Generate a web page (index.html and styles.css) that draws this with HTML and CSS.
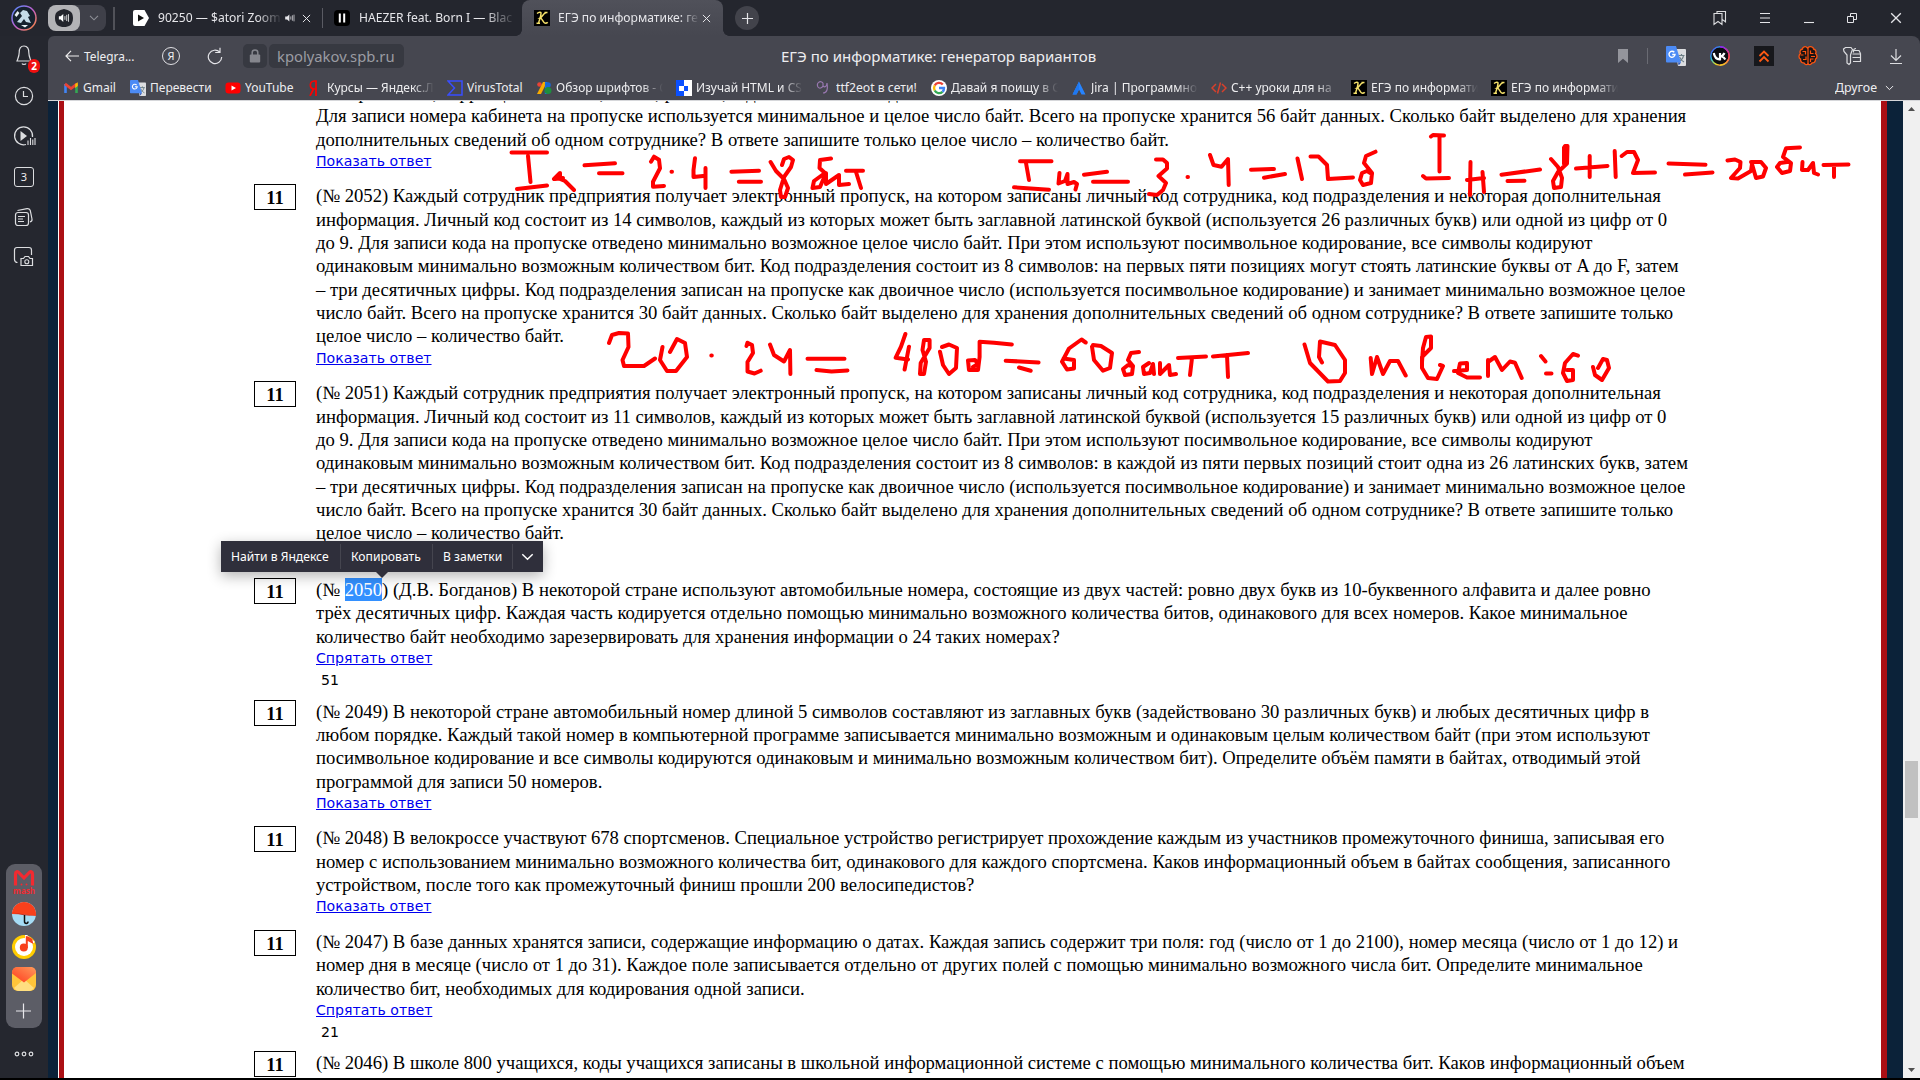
FILE: index.html
```html
<!DOCTYPE html>
<html lang="ru">
<head>
<meta charset="utf-8">
<title>ЕГЭ по информатике: генератор вариантов</title>
<link rel="stylesheet" href="styles.css">
</head>
<body>
<svg class="defs" width="0" height="0">
  <defs>
    <linearGradient id="ring" x1="0" y1="0" x2="1" y2="1"><stop offset="0" stop-color="#4a8dff"/><stop offset=".5" stop-color="#c060d0"/><stop offset="1" stop-color="#ff8a30"/></linearGradient>
    <linearGradient id="vkring" x1="0" y1="0" x2="1" y2="1"><stop offset="0" stop-color="#6030ff"/><stop offset=".35" stop-color="#20c0e0"/><stop offset=".6" stop-color="#e8e020"/><stop offset="1" stop-color="#ff2050"/></linearGradient>
    <linearGradient id="vkring2" x1="0" y1="0" x2="0" y2="1"><stop offset="0" stop-color="#a010f0"/><stop offset=".5" stop-color="#ff2060"/><stop offset="1" stop-color="#f0d020"/></linearGradient>
    <linearGradient id="mailred" x1="0" y1="1" x2="1" y2="0"><stop offset="0" stop-color="#ff3a1e"/><stop offset="1" stop-color="#ff9a5a"/></linearGradient>
    <symbol id="cross" viewBox="0 0 10 10"><path d="M1 1l8 8M9 1l-8 8" stroke="currentColor" stroke-width="1.1" fill="none"/></symbol>
    <symbol id="speaker" viewBox="0 0 12 10"><path d="M0 3.2h2.4L5.2.6v8.8L2.4 6.8H0z" fill="currentColor"/><path d="M7 3v4M9 1.6v6.8M11 .8v8.4" stroke="currentColor" stroke-width=".9"/></symbol>
    <symbol id="gtr" viewBox="0 0 20 20"><path d="M9 3h10a1 1 0 0 1 1 1v15a1 1 0 0 1-1 1h-7z" fill="#dcdde0"/><path d="M12.500 9.500h6M15.500 8v1.500M17.500 9.500c-.5 3-2.500 5-4.500 6M13.500 11c1 2.500 2.500 4 4.500 5" stroke="#6d7f86" stroke-width="1.200" fill="none"/><path d="M1 0h9l5 16.500H1a1 1 0 0 1-1-1V1a1 1 0 0 1 1-1z" fill="#4c8bf5"/><path d="M12 16.500h3l-2.300 3z" fill="#2f58b8"/><path d="M8.300 6.300A3 3 0 1 0 9 8.500H6.200" stroke="#fff" stroke-width="1.400" fill="none"/></symbol>
    <symbol id="kico" viewBox="0 0 16 16"><rect width="16" height="16" fill="#000"/><path d="M3 3.500c2-1.500 4-1.500 4-.5C7 6 5.500 10 4.500 13M2.500 13.300h3.500M12.500 2.600C9.500 3 8 7 6.200 8c2 0 3 5 5 5.300 1.300 0 2-.4 2.500-1.100M10.500 2.500h3" fill="none" stroke="#f4e06a" stroke-width="1.500"/></symbol>
    <symbol id="chev" viewBox="0 0 10 6"><path d="M1 .8l4 4 4-4" fill="none" stroke="currentColor" stroke-width="1.100"/></symbol>
  </defs>
</svg>

<div class="browser">
  <header class="tabs">
    <svg class="avatar" viewBox="0 0 26 26"><circle cx="13" cy="13" r="12" fill="#16222e" stroke="url(#ring)" stroke-width="1.500"/><path d="M6 17l5-6-2-3 3-3 4 1 3 5-2 1 3 6-5-1-2-3-3 4z" fill="#c5dce8"/><path d="M3.500 10l3-4 2 2-3 4zM10 20h7l-3 2.500z" fill="#e8f0f4"/></svg>
    <div class="media"><span class="media-on"><svg viewBox="0 0 18 18" width="18" height="18"><path d="M9 0c5 1.500 9 2 9 9s-4 9-9 9-9-2-9-9S4 1.500 9 0z" fill="#23252c"/><svg x="3.500" y="4.200" width="11" height="9.500" color="#fff"><use href="#speaker"/></svg></svg></span><svg class="media-chev" width="10" height="6"><use href="#chev"/></svg></div>
    <i class="bar bar-a"></i>
    <div class="tab tab-1">
      <svg width="16" height="16" viewBox="0 0 16 16"><path d="M2 0h9.500L16 8l-4.500 8H2a2 2 0 0 1-2-2V2a2 2 0 0 1 2-2z" fill="#fff"/><path d="M5 4.500L11 8l-6 3.500z" fill="#111"/></svg>
      <span class="label fade">90250 — $atori Zoom</span>
      <svg class="snd" width="10" height="8"><use href="#speaker"/></svg>
      <svg width="9" height="9"><use href="#cross"/></svg>
    </div>
    <i class="bar bar-b"></i>
    <div class="tab tab-2">
      <svg width="16" height="16" viewBox="0 0 16 16"><rect width="16" height="16" rx="4" fill="#000"/><path d="M4.800 3.500h2v9h-2zM9.200 3.500h2v9h-2z" fill="#fff"/></svg>
      <span class="label fade">HAEZER feat. Born I — Blac</span>
    </div>
    <div class="tab tab-3">
      <svg width="16" height="16"><use href="#kico"/></svg>
      <span class="label fade">ЕГЭ по информатике: ге</span>
      <svg width="9" height="9"><use href="#cross"/></svg>
    </div>
    <span class="newtab"><svg width="11" height="11" viewBox="0 0 11 11"><path d="M5.500 0v11M0 5.500h11" stroke="#e4e4e8" stroke-width="1.200"/></svg></span>
    <div class="win">
      <svg width="14" height="16" viewBox="0 0 14 16"><path d="M1 3.500h8v11l-4-3-4 3zM4 3.500v-2h8.500v10.300L9.500 9.600" fill="none" stroke="#dcdde0" stroke-width="1.100"/></svg>
      <svg width="12" height="12" viewBox="0 0 12 12"><path d="M1 1.500h10M1 6h10M1 10.500h10" stroke="#e4e4e8" stroke-width="1.100"/></svg>
      <svg width="12" height="12" viewBox="0 0 12 12"><path d="M1 10.500h10" stroke="#e4e4e8" stroke-width="1.100"/></svg>
      <svg width="12" height="12" viewBox="0 0 12 12"><path d="M1.500 4.500h6v6h-6zM4.500 4.500v-3h6v6h-3" fill="none" stroke="#e4e4e8"/></svg>
      <svg width="12" height="12" color="#e4e4e8"><use href="#cross"/></svg>
    </div>
  </header>

  <div class="main">
    <aside class="side">
      <div class="side-top">
        <span class="cell bell"><svg width="16" height="22" viewBox="0 0 16 22"><path d="M8 1c-3.600 0-4.800 3-4.800 6.500S2 13 1 16h14c-1-3-2.200-5-2.200-8.500S11.600 1 8 1zM6 18.500c.5 1.200 3.500 1.200 4 0" fill="none" stroke="#dcdde0" stroke-width="1.200"/></svg><b>2</b></span>
        <span class="cell"><svg width="20" height="20" viewBox="0 0 20 20"><circle cx="10" cy="10" r="8.600" fill="none" stroke="#dcdde0" stroke-width="1.200"/><path d="M9.500 5v5.500h4.500" fill="none" stroke="#dcdde0" stroke-width="1.200"/></svg></span>
        <span class="cell"><svg width="24" height="22" viewBox="0 0 24 22"><path d="M14 19.500A9 9 0 1 1 20.500 12" fill="none" stroke="#dcdde0" stroke-width="1.200"/><path d="M8.500 6l6.500 5-6.500 5z" fill="#dcdde0"/><path d="M16 15.500V20M18.500 13v7M20.800 14.500V20M23 13v7" stroke="#dcdde0" stroke-width="1.100"/></svg></span>
        <span class="cell"><span class="three">3</span></span>
        <span class="cell"><svg width="20" height="20" viewBox="0 0 20 20"><rect x="1.500" y="5.500" width="13" height="13" rx="2.500" fill="none" stroke="#dcdde0" stroke-width="1.200"/><path d="M3.500 3.500L13 1.600c2-.3 3 .3 3.300 2L18 12c.3 1.500-.5 2.500-2 2.900M4 9.500h7M4 12h5M4 14.500h6" fill="none" stroke="#dcdde0" stroke-width="1.200"/></svg></span>
        <span class="cell"><svg width="22" height="22" viewBox="0 0 22 22"><path d="M4.500 16.500c-1.500 0-3-1-3-3V4c0-1.500 1-2.500 2.500-2.500h12c1.500 0 2.500 1 2.500 2.500v5" fill="none" stroke="#dcdde0" stroke-width="1.200"/><path d="M8 12.500h2.500l1.500-2h3.500l1.500 2h2.500v7H8z" fill="none" stroke="#dcdde0" stroke-width="1.200"/><circle cx="13.800" cy="15.700" r="2" fill="none" stroke="#dcdde0" stroke-width="1.100"/></svg></span>
      </div>
      <div class="dock">
        <span class="mash"><svg width="22" height="17" viewBox="0 0 22 17"><path d="M2.500 15.500V4c0-2.500 2-3 3.500-1.200L11 8l5-5.200C17.500 1 19.500 1.500 19.500 4v11.500" fill="none" stroke="#f22a30" stroke-width="3.200"/><circle cx="8.500" cy="14.500" r="1" fill="#f22a30"/><circle cx="13.500" cy="14.500" r="1" fill="#f22a30"/></svg><em>mash</em></span>
        <svg width="24" height="24" viewBox="0 0 24 24"><circle cx="12" cy="12" r="12" fill="#a6dcf5"/><path d="M0 12A12 12 0 0 1 24 12v2L12 12.500 0 12z" fill="#f8401c"/><path d="M0 10.500l24 3.500-12-.8z" fill="#c8281a"/><path d="M12.500 13v6.500c0 2.500 3.500 2.500 3.500 0" fill="none" stroke="#111" stroke-width="1.500"/></svg>
        <svg width="24" height="24" viewBox="0 0 24 24"><circle cx="12" cy="12" r="12" fill="#ffcc00"/><circle cx="12" cy="12" r="9" fill="#fff"/><path d="M13 0h2l8 7-3 2-5-4v7h-2z" fill="#fff"/><circle cx="11.800" cy="12.500" r="4" fill="#f8401c"/><path d="M13.800 1v12h2V6l5.500 3-1-5-4-2.500z" fill="#f8401c"/></svg>
        <svg width="24" height="24" viewBox="0 0 24 24"><rect width="24" height="24" rx="6" fill="#ffc53a"/><path d="M2 21l10-9 10 9c-1.500 2-3 3-5 3H7c-2 0-3.500-1-5-3z" fill="#ffdf80"/><path d="M0 6.500C0 2 2 0 6 0h12c4 0 6 2 6 6L12 15.500z" fill="url(#mailred)"/></svg>
        <svg width="24" height="24" viewBox="0 0 24 24"><path d="M11.500 4.500v15M4 12h15" stroke="#e8e8ec" stroke-width="1.200"/></svg>
      </div>
      <svg class="dots" width="20" height="6" viewBox="0 0 20 6"><g fill="none" stroke="#dcdde0" stroke-width="1.200"><circle cx="3" cy="3" r="1.800"/><circle cx="10" cy="3" r="1.800"/><circle cx="17" cy="3" r="1.800"/></g></svg>
    </aside>

    <div class="view">
      <div class="toolbar">
        <svg class="back" width="14" height="12" viewBox="0 0 14 12"><path d="M6 .8L1 6l5 5.200M1 6h13" fill="none" stroke="#eee" stroke-width="1.200"/></svg>
        <span class="backlabel">Telegra...</span>
        <span class="ya">Я</span>
        <svg class="reload" width="16" height="18" viewBox="0 0 16 18"><path d="M12.800 5.200A6.700 6.700 0 1 0 14.700 10M13 .8v4.700H8.200" fill="none" stroke="#e4e4e8" stroke-width="1.200"/></svg>
        <span class="lock"><svg width="12" height="14" viewBox="0 0 12 14"><rect x=".8" y="5.500" width="10.400" height="8" rx="1" fill="#85868d"/><path d="M3.200 6V3.500c0-3.300 5.600-3.300 5.600 0V6" fill="none" stroke="#85868d" stroke-width="1.500"/></svg></span>
        <span class="url">kpolyakov.spb.ru</span>
        <span class="title">ЕГЭ по информатике: генератор вариантов</span>
        <svg class="mark" width="10" height="14" viewBox="0 0 10 14"><path d="M0 0h10v14L5 9.800 0 14z" fill="#94959c"/></svg>
        <i class="bar bar-c"></i>
        <div class="ext">
          <svg width="20" height="20"><use href="#gtr"/></svg>
          <svg width="20" height="20" viewBox="0 0 20 20"><circle cx="10" cy="10" r="9.200" fill="#0c0c10" stroke="url(#vkring)" stroke-width="1.400"/><path d="M10 .8a9.200 9.200 0 0 1 0 18.400" fill="none" stroke="url(#vkring2)" stroke-width="1.400"/><path d="M3.800 7c.8 4.500 3 6.500 6.200 6.300V7M10 10.300c2 0 3.500-1.500 4.500-3.300M11.500 10.200c1.500.5 3 1.800 3.800 3.300" fill="none" stroke="#fff" stroke-width="2.200"/></svg>
          <svg width="20" height="20" viewBox="0 0 20 20"><rect width="20" height="20" fill="#17181c"/><path d="M5.500 10L10 5.500l4.500 4.500M5.500 15.500L10 11l4.500 4.500" fill="none" stroke="#ff5a14" stroke-width="1.800"/></svg>
          <svg width="20" height="20" viewBox="0 0 20 20"><path d="M9.500 2C7.500-.5 4.500 1 4.500 3 2 3.500 1.500 6 2.500 7.500.5 9 .5 12 2.500 13c0 2.500 1.500 4 3.500 4 1 2 3 2 4 .8 1 1.200 3 1.200 4-.8 2 0 3.500-1.500 3.500-4 2-1 2-4 0-5.500 1-1.500.5-4-2-4.500C15.500 1 12.500-.5 9.500 2z" fill="#1c1414" stroke="#ff5410" stroke-width="1.300"/><path d="M10 2v16M4.500 5.500h3v3M2.500 9h3M5 13.500h3v-3M12.500 4.500v3h3M13 10.500h4M12.500 16v-3h3" fill="none" stroke="#ff5410" stroke-width="1.200"/></svg>
          <svg width="20" height="20" viewBox="0 0 20 20"><path d="M3.500 1.500h5.500l1.500 2L9 7.500 8.500 9v8L7 18.500 5 17V9L2 5.500 1.500 3z" fill="none" stroke="#dcdde0" stroke-width="1.200"/><path d="M11.500 6.500V5c0-1.500 1-2.500 2.500-2.500M10.500 8h8v7.500h-7.500M12 4.500h5l1.500 3M10.500 11.500h8" fill="none" stroke="#dcdde0" stroke-width="1.200"/></svg>
          <svg width="20" height="20" viewBox="0 0 20 20"><path d="M10 3v11M5 9.500l5 5 5-5M4 17.500h12" fill="none" stroke="#dcdde0" stroke-width="1.200"/></svg>
        </div>
      </div>

      <nav class="bookmarks">
        <a><svg viewBox="0 0 16 16"><path d="M2.500 4V13" stroke="#4285f4" stroke-width="2.600"/><path d="M13.500 4V13" stroke="#34a853" stroke-width="2.600"/><path d="M2 3.800L8 8.500l6-4.700" fill="none" stroke="#ea4335" stroke-width="2.800"/><path d="M12.200 4l2.600-1.800V6l-2.600 2z" fill="#fbbc04"/></svg><span class="w33">Gmail</span></a>
        <a><svg><use href="#gtr"/></svg><span class="w62">Перевести</span></a>
        <a><svg viewBox="0 0 16 16"><rect x=".5" y="2.500" width="15" height="11" rx="3" fill="#f00"/><path d="M6.500 5.500L11 8l-4.500 2.500z" fill="#fff"/></svg><span class="w49">YouTube</span></a>
        <a><svg viewBox="0 0 16 16"><path d="M9 16V1H7.500C2 1 2 9 7.500 9H9M6.500 9L3 16" fill="none" stroke="#f00" stroke-width="1.700"/></svg><span class="w107 fade">Курсы — Яндекс.Л</span></a>
        <a><svg viewBox="0 0 16 16"><path d="M15 5V1H1l6.500 7L1 15h14V1" fill="none" stroke="#394eff" stroke-width="1.500"/></svg><span class="w55">VirusTotal</span></a>
        <a><svg viewBox="0 0 16 16"><circle cx="3.500" cy="4.500" r="2.300" fill="#ea4335"/><path d="M7 2h4L5 14H1z" fill="#f9ab00"/><path d="M9 2h2.500v12H8.800z" fill="#1a73e8"/><circle cx="12" cy="5" r="2.800" fill="#1967d2"/><circle cx="12" cy="10.500" r="3.500" fill="#1e8e3e"/></svg><span class="w107 fade">Обзор шрифтов - G</span></a>
        <a><svg viewBox="0 0 16 16"><path d="M0 0h8v16H0z" fill="#0a50ff"/><path d="M8 0h8v16H8z" fill="#fff"/><path d="M3 6h5v5H3z" fill="#fff"/><path d="M8 6h4v5H8z" fill="#0a50ff"/></svg><span class="w107 fade">Изучай HTML и CS</span></a>
        <a><svg viewBox="0 0 16 16"><path d="M7 3C4 0 0 3 2 7c1.500 2 4 1 5-1V3M7 6c2 2 4 0 4-3M11 3c1 6 0 10-4 10" fill="none" stroke="#9878b0" stroke-width="1.200"/></svg><span class="w82">ttf2eot в сети!</span></a>
        <a><svg viewBox="0 0 16 16"><circle cx="8" cy="8" r="8" fill="#fff"/><g fill="none" stroke-width="2.400"><path d="M11.800 4.500A5 5 0 0 0 3.700 5.500" stroke="#ea4335"/><path d="M3.700 5.500a5 5 0 0 0 0 5" stroke="#fbbc05"/><path d="M3.700 10.500a5 5 0 0 0 7.800 1.300" stroke="#34a853"/><path d="M11.500 11.800A5 5 0 0 0 13 8H8" stroke="#4285f4"/></g></svg><span class="w107 fade">Давай я поищу в G</span></a>
        <a><svg viewBox="0 0 16 16"><path d="M8 1.500l6.500 13h-4L8 9.500 5.500 14.500h-4z" fill="#2684ff"/><path d="M8 1.500v8l-2.500 5h-4z" fill="#1f78f0"/></svg><span class="w107 fade">Jira | Программно</span></a>
        <a><svg viewBox="0 0 16 16"><path d="M5 4L1 8l4 4M11 4l4 4-4 4M9.500 2.500l-3 11" fill="none" stroke="#d8402c" stroke-width="1.500"/></svg><span class="w107 fade">C++ уроки для на</span></a>
        <a><svg><use href="#kico"/></svg><span class="w107 fade">ЕГЭ по информати</span></a>
        <a><svg><use href="#kico"/></svg><span class="w107 fade">ЕГЭ по информати</span></a>
        <a class="other"><span>Другое</span><svg class="small"><use href="#chev"/></svg></a>
      </nav>

      <div class="page">
        <i class="edge navy-l"></i><i class="edge red-l"></i>
        <main class="tasks">
          <section class="task first"><div class="num"></div><div>
            <p>Номер состоит, коррекция не важна, число, разный, и дополнительно код.<br>
            Для записи номера кабинета на пропуске используется минимальное и целое число байт. Всего на пропуске хранится 56 байт данных. Сколько байт выделено для хранения<br>
            дополнительных сведений об одном сотруднике? В ответе запишите только целое число – количество байт.</p>
            <a class="answer-link">Показать ответ</a></div></section>
          <section class="task"><div class="num">11</div><div>
            <p>(№ 2052) Каждый сотрудник предприятия получает электронный пропуск, на котором записаны личный код сотрудника, код подразделения и некоторая дополнительная<br>
            информация. Личный код состоит из 14 символов, каждый из которых может быть заглавной латинской буквой (используется 26 различных букв) или одной из цифр от 0<br>
            до 9. Для записи кода на пропуске отведено минимально возможное целое число байт. При этом используют посимвольное кодирование, все символы кодируют<br>
            одинаковым минимально возможным количеством бит. Код подразделения состоит из 8 символов: на первых пяти позициях могут стоять латинские буквы от A до F, затем<br>
            – три десятичных цифры. Код подразделения записан на пропуске как двоичное число (используется посимвольное кодирование) и занимает минимально возможное целое<br>
            число байт. Всего на пропуске хранится 30 байт данных. Сколько байт выделено для хранения дополнительных сведений об одном сотруднике? В ответе запишите только<br>
            целое число – количество байт.</p>
            <a class="answer-link">Показать ответ</a></div></section>
          <section class="task"><div class="num">11</div><div>
            <p>(№ 2051) Каждый сотрудник предприятия получает электронный пропуск, на котором записаны личный код сотрудника, код подразделения и некоторая дополнительная<br>
            информация. Личный код состоит из 11 символов, каждый из которых может быть заглавной латинской буквой (используется 15 различных букв) или одной из цифр от 0<br>
            до 9. Для записи кода на пропуске отведено минимально возможное целое число байт. При этом используют посимвольное кодирование, все символы кодируют<br>
            одинаковым минимально возможным количеством бит. Код подразделения состоит из 8 символов: в каждой из пяти первых позиций стоит одна из 26 латинских букв, затем<br>
            – три десятичных цифры. Код подразделения записан на пропуске как двоичное число (используется посимвольное кодирование) и занимает минимально возможное целое<br>
            число байт. Всего на пропуске хранится 30 байт данных. Сколько байт выделено для хранения дополнительных сведений об одном сотруднике? В ответе запишите только<br>
            целое число – количество байт.</p>
            <a class="answer-link"></a></div></section>
          <section class="task"><div class="num">11</div><div>
            <p>(№ <span class="sel">2050</span>) (Д.В. Богданов) В некоторой стране используют автомобильные номера, состоящие из двух частей: ровно двух букв из 10-буквенного алфавита и далее ровно<br>
            трёх десятичных цифр. Каждая часть кодируется отдельно помощью минимально возможного количества битов, одинакового для всех номеров. Какое минимальное<br>
            количество байт необходимо зарезервировать для хранения информации о 24 таких номерах?</p>
            <a class="answer-link">Спрятать ответ</a><div class="answer">51</div></div></section>
          <section class="task"><div class="num">11</div><div>
            <p>(№ 2049) В некоторой стране автомобильный номер длиной 5 символов составляют из заглавных букв (задействовано 30 различных букв) и любых десятичных цифр в<br>
            любом порядке. Каждый такой номер в компьютерной программе записывается минимально возможным и одинаковым целым количеством байт (при этом используют<br>
            посимвольное кодирование и все символы кодируются одинаковым и минимально возможным количеством бит). Определите объём памяти в байтах, отводимый этой<br>
            программой для записи 50 номеров.</p>
            <a class="answer-link">Показать ответ</a></div></section>
          <section class="task"><div class="num">11</div><div>
            <p>(№ 2048) В велокроссе участвуют 678 спортсменов. Специальное устройство регистрирует прохождение каждым из участников промежуточного финиша, записывая его<br>
            номер с использованием минимально возможного количества бит, одинакового для каждого спортсмена. Каков информационный объем в байтах сообщения, записанного<br>
            устройством, после того как промежуточный финиш прошли 200 велосипедистов?</p>
            <a class="answer-link">Показать ответ</a></div></section>
          <section class="task"><div class="num">11</div><div>
            <p>(№ 2047) В базе данных хранятся записи, содержащие информацию о датах. Каждая запись содержит три поля: год (число от 1 до 2100), номер месяца (число от 1 до 12) и<br>
            номер дня в месяце (число от 1 до 31). Каждое поле записывается отдельно от других полей с помощью минимально возможного числа бит. Определите минимальное<br>
            количество бит, необходимых для кодирования одной записи.</p>
            <a class="answer-link">Спрятать ответ</a><div class="answer">21</div></div></section>
          <section class="task"><div class="num">11</div><div>
            <p>(№ 2046) В школе 800 учащихся, коды учащихся записаны в школьной информационной системе с помощью минимального количества бит. Каков информационный объем</p></div></section>
        </main>
        <i class="edge red-r"></i><i class="edge navy-r"></i>
        <div class="scroll">
          <svg width="17" height="17" viewBox="0 0 17 17"><path d="M5 10l3.500-4 3.500 4z" fill="#505050"/></svg>
          <i class="thumb"></i>
          <svg width="17" height="17" viewBox="0 0 17 17"><path d="M5 7l3.500 4L12 7z" fill="#505050"/></svg>
        </div>
      </div>
    </div>
  </div>
  <div class="bottom"></div>
</div>

<svg class="ink" width="1920" height="300" viewBox="0 100 1920 300">
  <path d="M511.500 152.500H547M528 156l2.500 26M517 189l30-3.500M554 179l6-6v6l5 2 9 9M555 179l8-1M584.500 165.300l30.500-2M599 173.300h23.500
  M651 161.700l3-5 5 3 1 8.600-7 13.400v5l11-.7M671.500 171.700h.5M695 158.300l-1.500 11.700v7l12-1.300M705.500 168v20M731.400 171.700l27.600-1M738.800 181.700H761
  M770.600 162l5.400 9 8 8 4 9-3 9h-4l-1-7 4-13 7-10 2-7-4-3-5 2-2 6M831 158.500l-11 1.500-.5 8 5.500 5-11 8-1.500 7 7.500-1 6-14v11l13-9v10l10-1M846 170.700h17M856 172l5 16
  M1020 161.300h31.500M1026 163l3 17M1014 187.300l35 2.400M1059.500 173l-1 10.500 6.500-2.500 2.500-7v10l6.500-2 3 2-1.500 5.500M1084 174.700l23-3M1093 181.700h35
  M1156 159.500h7l4 3.500v5.500l-8.500 7.500 7.500 7-3 7-6 5-8-1M1187.500 177h.5M1210 155l3.500 10 8 1.700L1228 159l.7 26M1251 169.700l23-.7M1264 177.700l21-3.700M1297.500 158.500L1302 179
  M1310.500 156.500h8l8.500 8.500 1 14 25-1.500M1375.500 151.700l-9.500 4.300-2 7 8 10-1 10-8 2-3-5 2-7 5-2 5 3
  M1431 136.500l2-1.500 11 .5M1439.500 137v34.500M1423 176l3 2.500 23-.5M1470.500 162l-.5 33M1467 180l17-2M1482.500 172l1.500 20M1501.500 174.700l38.500-5.200M1507.500 181l17-.3
  M1551 159l7 8 4 11-1 9-7 1-1-7 5-9 9-8.500.5-17.500-2.500 0-1 1.500v16.500M1576 168.500l31.500-2.500M1589.700 156v21M1614.700 151l1 26M1621.700 156l5.300-4h7l4 8-5 13 22-.5M1668.500 163.500l37 1.200M1685 174.500l27.500-2
  M1727.500 160.500l7.500-1 5.500 2.500-.5 6-9 10 7 .5 13-7.500 1-7 4 14 7-1.500 3-8.500-5-6-10 0M1800 147.500l-14 .8-3 8.700 8 6-1 8-8 2-5-6 3-4 7-1M1802.500 162l-.5 8h6l5-7 1 10 4 1.500M1823.500 165l25-.5M1834 166v11
  M609 343l3-8 7-2 9 .5.500 13.500-6 13 1.500 6h20l11-7.500M662.500 347l-2.500 13 7 11h9l11-14-2-14-8-4-7 13M711.300 355.500h.5M746.500 346l1-3.300 4.500 2.300 1 8-5.500 9v9.500l7 2 6.200-2.800M770 344.500l4 10.500 10 6.500 6-11.500.4 24M807.500 358.700h37M816.500 370l15 1.500 16-1
  M905.400 334L901 346.700l-5.300 11 12.300 1.800M909 346.700l-4.400 22.800M929.600 340H924l-1.500 10 3.500 11.700-2 12.300h-4l.7-11 8.900-15zM940 351.700l3 13.300 6 9 7-6 1-20-8-3.500-7 2.500M1011.800 344.500l-17.800-1.800-14.400-1V357l-1.600 13h-9l-1-9.500 7-.5 3 4-5 3M1005.700 360.700l32.900 1.800M1019 367.500l11.700 3.200
  M1085.700 342.500l-4.200-3-12.500 9-7 13.200 5 7.800 7-1v-8.500l-10.500-1.500M1092 346.700l2 13.300 9 10.700 7-2.700 2-15-11-7-8-1
  M1139 352l-8 1-3 7 5 6-1 8-7 1-2-6 5-4 4 1M1149 363l-6 4 1 7 6-1 3-9 1 10M1160 363v11l9-9 1 10 6-1M1178 358l28-1.500M1192 358l-2 17M1213 356.500l35-3.500M1227 355l1 22
  M1304.500 344.500l5.500 18.500 18 18.500 12-.5 5-8v-13l-10-15-15-3.500-1 15.500 3 5.500M1370.700 358l1.300 16 5-17 6 17 7-13h8l7.700 14.500M1431 336.500V348l-9 9v11l6 10 9 1 6-13-3-1M1431 336.500l-5 .5-3 11-1 14
  M1454 371l13-1v-7l-7 .5-2 9.500 9 4.500h13M1488 360v16-14l7-5 7 13 8-8.500 5 1.200 6.700 15.300M1541 356l4.500 5.500M1546 373.500h5.500M1578 355.700l-5-1.700-8 9-2 10 4 8 6-1v-10l-6 0M1593 367l2 8 7 5 7-12-2-8-4-1-5 9"/>
</svg>

<div class="popup"><span class="p1">Найти в Яндексе</span><span class="p2">Копировать</span><span class="p3">В заметки</span><span class="p4"><svg width="13" height="8"><use href="#chev"/></svg></span></div>
</body>
</html>
```
FILE: styles.css
```css
* { box-sizing: border-box; }
body { margin: 0; width: 1920px; height: 1080px; overflow: hidden; font-family: "Noto Sans", "Open Sans", sans-serif; font-size: 12px; color: #eeeef0; background: #25272f; }
svg { display: block; flex: none; }
.defs { position: absolute; }
.browser { display: flex; flex-direction: column; width: 1920px; height: 1080px; }
.bar { flex: none; width: 1px; background: #5a5b63; }

/* tab strip */
.tabs { display: flex; align-items: center; height: 36px; padding-left: 11px; background: #24262e; }
.avatar { width: 26px; height: 26px; }
.media { display: flex; align-items: center; width: 58px; height: 26px; margin-left: 11px; border-radius: 8px; background: #3f4049; color: #8e8f96; }
.media-on { display: flex; align-items: center; justify-content: center; width: 32px; height: 26px; border-radius: 8px; background: #b3b3b6; }
.media-chev { margin-left: 9px; }
.bar-a { width: 2px; height: 23px; margin-left: 7px; background: #515259; }
.tab { display: flex; flex: none; align-items: center; height: 36px; color: #e6e6ea; }
.label { flex: none; height: 20px; line-height: 20px; overflow: hidden; white-space: nowrap; font-size: 12.100px; }
.fade { -webkit-mask-image: linear-gradient(90deg, #000 80%, transparent 100%); mask-image: linear-gradient(90deg, #000 80%, transparent 100%); }
.tab-1 { width: 191px; padding-left: 18px; }
.tab-1 .label { width: 124px; margin-left: 9px; }
.tab-1 .snd { margin: 0 7px 0 3px; }
.bar-b { height: 20px; margin-left: 16px; }
.tab-2 { width: 199px; padding-left: 11px; }
.tab-2 .label { width: 157px; margin-left: 9px; }
.tab-3 { position: relative; width: 201px; padding-left: 12px; border-radius: 8px 8px 0 0; background: linear-gradient(#50515a, #464750); }
.tab-3::before, .tab-3::after { content: ""; position: absolute; bottom: 0; width: 6px; height: 6px; }
.tab-3::before { left: -6px; background: radial-gradient(circle at 0 0, transparent 5.500px, #464750 6px); }
.tab-3::after { right: -6px; background: radial-gradient(circle at 100% 0, transparent 5.500px, #464750 6px); }
.tab-3 .label { width: 141px; margin: 0 3px 0 8px; }
.tab-3 .fade { -webkit-mask-image: linear-gradient(90deg, #000 88%, transparent 100%); mask-image: linear-gradient(90deg, #000 88%, transparent 100%); }
.newtab { display: flex; align-items: center; justify-content: center; width: 24px; height: 24px; margin-left: 12px; border-radius: 50%; background: #42434b; }
.win { display: flex; justify-content: space-between; align-items: center; width: 189px; margin: 0 18px 0 auto; }

/* left rail */
.main { display: flex; flex: 1; min-height: 0; }
.side { display: flex; flex-direction: column; align-items: center; width: 48px; background: #25272f; }
.side-top { display: flex; flex-direction: column; height: 828px; }
.cell { position: relative; display: flex; align-items: center; justify-content: center; width: 48px; height: 40.200px; }
.bell b { position: absolute; left: 28px; top: 23px; width: 12px; height: 14px; border-radius: 6px; background: #f01010; font-size: 10px; line-height: 14px; text-align: center; color: #fff; }
.three { width: 20px; height: 20px; border: 1px solid #dcdde0; border-radius: 3px; line-height: 18px; text-align: center; font-size: 11px; }
.dock { display: flex; flex-direction: column; align-items: center; justify-content: space-between; width: 36px; height: 164px; padding: 6px 0 5px; border-radius: 9px; background: #5c5d66; }
.mash { display: flex; flex-direction: column; align-items: center; height: 24px; color: #f22a30; }
.mash em { font: bold 8px/7px "Noto Sans", sans-serif; }
.dots { margin-top: 23px; }

/* address row */
.view { display: flex; flex-direction: column; width: 1872px; }
.toolbar { display: flex; align-items: center; height: 40px; padding-left: 17px; border-radius: 6px 8px 0 0; background: #464750; }
.backlabel { width: 51px; margin-left: 5px; white-space: nowrap; font-size: 11.900px; }
.ya { width: 18px; height: 18px; margin-left: 27px; border: 1px solid #e0e0e4; border-radius: 50%; line-height: 16px; text-align: center; font-size: 11px; }
.reload { margin-left: 27px; }
.lock { display: flex; align-items: center; justify-content: center; width: 24px; height: 24px; margin-left: 20px; border-radius: 5px; background: #373941; }
.url { width: 135px; height: 24px; margin-left: 2px; padding-left: 8px; border-radius: 5px; background: #373941; color: #9b9ca3; font-size: 14.800px; line-height: 24px; white-space: nowrap; }
.title { width: 320px; margin-left: 377px; font-size: 15.050px; line-height: 24px; white-space: nowrap; }
.mark { margin-left: 517px; }
.bar-c { height: 16px; margin-left: 19px; background: #6a6b73; }
.ext { display: flex; gap: 24px; margin-left: 18px; }

/* bookmarks row */
.bookmarks { display: flex; align-items: center; gap: 13px; height: 24px; padding-left: 15px; background: #464750; }
.bookmarks a { display: flex; flex: none; align-items: center; gap: 4px; }
.bookmarks svg { width: 16px; height: 16px; }
.bookmarks span { height: 20px; line-height: 20px; overflow: hidden; white-space: nowrap; }
.w33 { width: 34px; }
.w49 { width: 49px; }
.w55 { width: 56px; }
.w62 { width: 62px; }
.w82 { width: 82px; font-size: 12.200px; }
.w107 { width: 107px; }
.bookmarks .other { gap: 8px; margin: 0 26px 0 auto; font-size: 12.400px; }
.bookmarks .small { width: 9px; height: 6px; }

/* document */
.page { display: flex; flex: 1; min-height: 0; overflow: hidden; border-top: 1px solid #d6d7da; background: #fff; }
.edge { flex: none; }
.navy-l { width: 10px; background: #0b2239; }
.red-l { width: 5px; margin-left: 1px; background: #ab0f14; }
.red-r { width: 6px; background: #ab0f14; }
.navy-r { width: 16px; background: #0b2239; }
.tasks { flex: 1; min-width: 0; padding-left: 190px; color: #000; font: 18.667px/23.333px "Liberation Serif", "Times New Roman", serif; }
.task { display: grid; grid-template-columns: 42px 1fr; column-gap: 20px; margin-bottom: 13.500px; white-space: nowrap; }
.task p { margin: 0; }
.first { margin-top: -20px; }
.num { height: 26px; border: 1px solid #000; text-align: center; font-weight: bold; line-height: 25px; }
.first .num { visibility: hidden; }
.answer-link { display: block; height: 20px; color: #0000ee; font: 14.100px/20px "DejaVu Sans", Verdana, sans-serif; text-decoration: underline; }
.answer { height: 18px; padding-left: 5px; font: 14.100px/25px "DejaVu Sans", Verdana, sans-serif; }
.sel { display: inline-block; height: 23px; line-height: 23px; vertical-align: top; background: #3390ff; color: #fff; }
.scroll { display: flex; flex-direction: column; align-items: center; width: 17px; background: #f0f0f0; }
.thumb { width: 13px; height: 57px; margin: 643px 0 auto; background: #c1c1c1; }
.bottom { height: 2px; background: #000; }

/* pen strokes over the page */
.ink { position: absolute; left: 0; top: 100px; pointer-events: none; fill: none; stroke: #f00; stroke-width: 4; stroke-linecap: round; stroke-linejoin: round; }

/* selection menu */
.popup { position: absolute; left: 221px; top: 541px; display: flex; align-items: center; width: 322px; height: 31px; background: #2f2f3b; box-shadow: 0 4px 14px rgba(0, 0, 0, .3); font-size: 12.150px; color: #fff; white-space: nowrap; }
.popup::after { content: ""; position: absolute; left: 155px; top: 31px; border: 6px solid transparent; border-top-color: #2f2f3b; border-bottom: 0; }
.popup span { display: flex; align-items: center; height: 25px; padding-left: 10px; border-left: 1px solid #45454f; }
.popup .p1 { width: 119px; border-left: 0; }
.p2 { width: 92px; }
.p3 { width: 80px; }
.popup .p4 { width: 31px; padding-left: 8px; }
```
